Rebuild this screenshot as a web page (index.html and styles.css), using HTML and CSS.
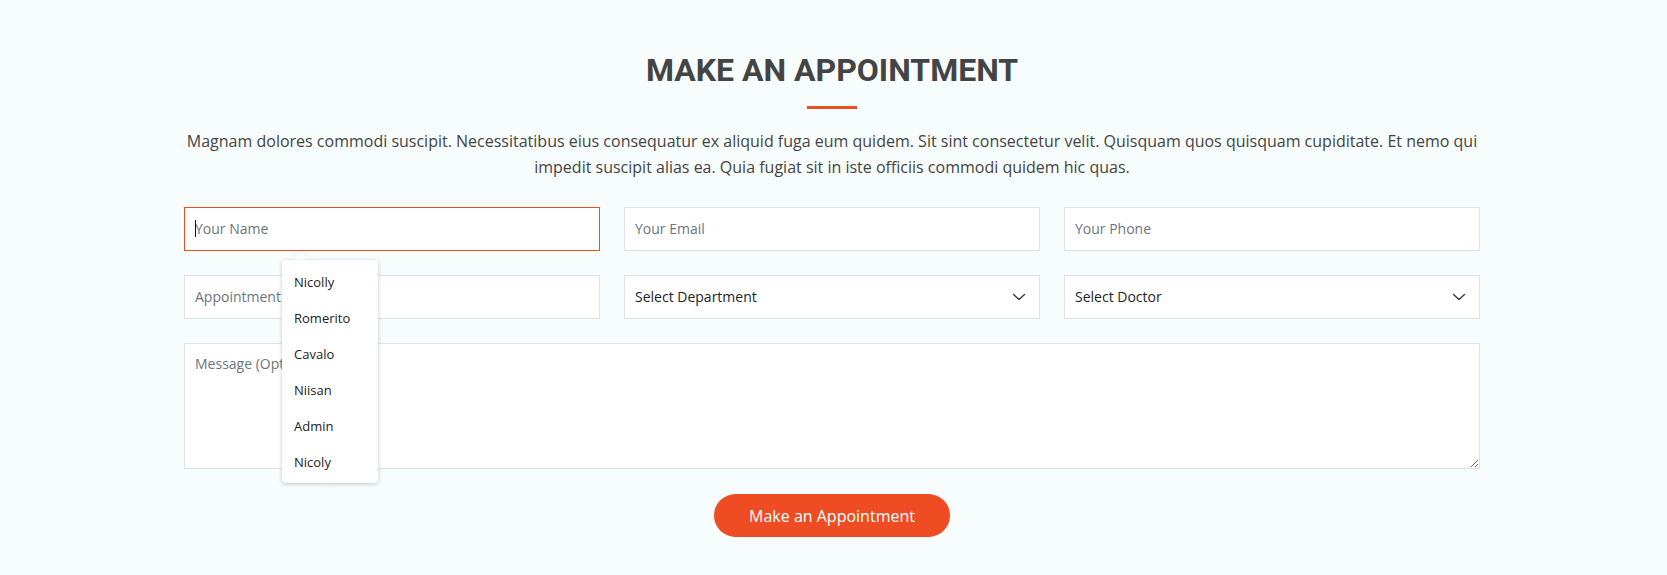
FILE: index.html
```html
<!DOCTYPE html>
<html lang="en">
<head>
<meta charset="utf-8">
<title>Make an Appointment</title>
<link rel="stylesheet" href="styles.css">
</head>
<body>
<section class="appointment">
  <div class="container">
    <div class="section-title">
      <h2>MAKE AN APPOINTMENT</h2>
      <p>Magnam dolores commodi suscipit. Necessitatibus eius consequatur ex aliquid fuga eum quidem. Sit sint consectetur velit. Quisquam quos quisquam cupiditate. Et nemo qui impedit suscipit alias ea. Quia fugiat sit in iste officiis commodi quidem hic quas.</p>
    </div>
    <form class="form">
      <div class="row">
        <div class="field">
          <input class="control focused" type="text" placeholder="Your Name">
          <span class="caret"></span>
          <div class="suggest">
            <span class="suggest-arrow"></span>
            <ul class="suggest-list">
              <li>Nicolly</li>
              <li>Romerito</li>
              <li>Cavalo</li>
              <li>Niisan</li>
              <li>Admin</li>
              <li>Nicoly</li>
            </ul>
          </div>
        </div>
        <div class="field"><input class="control" type="email" placeholder="Your Email"></div>
        <div class="field"><input class="control" type="tel" placeholder="Your Phone"></div>
      </div>
      <div class="row">
        <div class="field"><input class="control" type="text" placeholder="Appointment Date"></div>
        <div class="field">
          <select class="control select"><option>Select Department</option></select>
          <svg class="chevron" width="16" height="12" viewBox="0 0 16 12"><path d="M2.5 3.5l5.5 5 5.5-5" fill="none" stroke="#343a40" stroke-width="1.4" stroke-linecap="round" stroke-linejoin="round"/></svg>
        </div>
        <div class="field">
          <select class="control select"><option>Select Doctor</option></select>
          <svg class="chevron" width="16" height="12" viewBox="0 0 16 12"><path d="M2.5 3.5l5.5 5 5.5-5" fill="none" stroke="#343a40" stroke-width="1.4" stroke-linecap="round" stroke-linejoin="round"/></svg>
        </div>
      </div>
      <textarea class="control message" placeholder="Message (Optional)"></textarea>
      <div class="actions">
        <button type="button" class="btn">Make an Appointment</button>
      </div>
    </form>
  </div>
</section>
</body>
</html>
```

FILE: styles.css
```css
html, body {
  margin: 0;
  padding: 0;
  background: #f7fcfc;
}

body {
  font-family: "Open Sans", "Liberation Sans", sans-serif;
  color: #444444;
}

.appointment {
  width: 1664px;
  padding: 51px 0 38px;
}

.container {
  width: 1296px;
  margin: 0 auto;
}

.section-title {
  display: flex;
  flex-direction: column;
  align-items: center;
  text-align: center;
}

.section-title h2 {
  position: relative;
  margin: 0;
  padding-bottom: 20px;
  font-family: Roboto, "Liberation Sans", sans-serif;
  font-size: 32px;
  font-weight: 700;
  line-height: 1.2;
  color: #444444;
}

.section-title h2::after {
  content: "";
  position: absolute;
  left: 50%;
  bottom: 0;
  width: 50px;
  height: 3px;
  margin-left: -25px;
  background: #f04c23;
}

.section-title p {
  margin: 19px 0 0;
  font-size: 16px;
  line-height: 26px;
  color: #444444;
}

.form {
  margin-top: 27px;
  display: flex;
  flex-direction: column;
  gap: 24px;
}

.row {
  display: grid;
  grid-template-columns: repeat(3, 1fr);
  gap: 24px;
}

.field {
  position: relative;
}

.control {
  display: block;
  box-sizing: border-box;
  width: 100%;
  height: 44px;
  padding: 9px 10px 11px;
  margin: 0;
  font-family: "Open Sans", "Liberation Sans", sans-serif;
  font-size: 14px;
  color: #212529;
  background: #ffffff;
  border: 1px solid #dee2e6;
  border-radius: 0;
  outline: none;
}

.control::placeholder {
  color: #6c757d;
  opacity: 1;
}

.control.focused {
  border-color: #f04c23;
}

.select {
  appearance: none;
  -webkit-appearance: none;
  padding-right: 40px;
}

.chevron {
  position: absolute;
  right: 13px;
  top: 16px;
  pointer-events: none;
}

.caret {
  position: absolute;
  left: 11px;
  top: 13px;
  width: 1px;
  height: 17px;
  background: #111111;
}

.message {
  height: 126px;
  padding-top: 10px;
  resize: vertical;
}

.actions {
  display: flex;
  justify-content: center;
  margin-top: 1px;
}

.btn {
  height: 43px;
  padding: 0 35px;
  font-family: "Open Sans", "Liberation Sans", sans-serif;
  font-size: 16px;
  color: #ffffff;
  background: #f04c23;
  border: 0;
  border-radius: 50px;
  cursor: pointer;
}

.suggest {
  position: absolute;
  left: 98px;
  top: 53px;
  z-index: 5;
  width: 96px;
}

.suggest-arrow {
  position: absolute;
  left: 14px;
  top: -7px;
  width: 10px;
  height: 10px;
  background: #ffffff;
  transform: rotate(45deg);
  box-shadow: -1px -1px 1px rgba(0, 0, 0, 0.06);
}

.suggest-list {
  position: relative;
  list-style: none;
  margin: 0;
  padding: 4px 0 3px;
  background: #ffffff;
  border-radius: 4px;
  box-shadow: 0 1px 4px rgba(0, 0, 0, 0.22);
}

.suggest-list li {
  height: 36px;
  line-height: 36px;
  padding-left: 12px;
  font-family: "Open Sans", "Liberation Sans", sans-serif;
  font-size: 13px;
  color: #222222;
}
```
